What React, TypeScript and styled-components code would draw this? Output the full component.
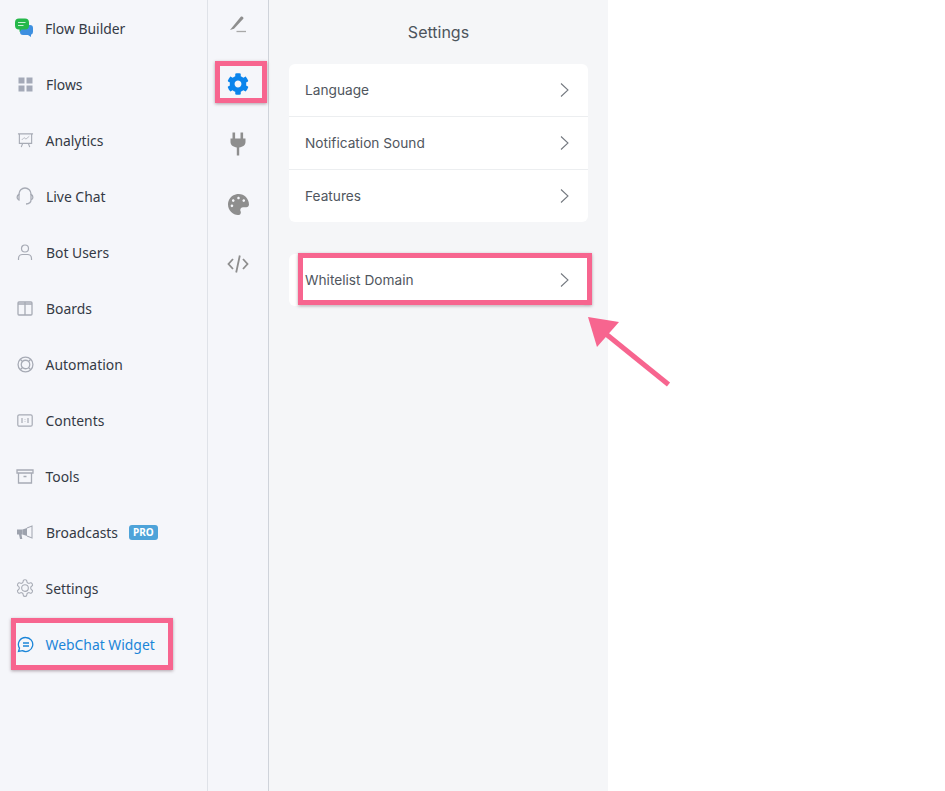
import React from "react";
import styled, { createGlobalStyle } from "styled-components";
import { FaCog, FaPalette } from "react-icons/fa";

const Global = createGlobalStyle`
  html, body { margin: 0; padding: 0; background: #fff; }
  * { box-sizing: border-box; }
`;

const Page = styled.div`
  position: relative;
  display: flex;
  width: 945px;
  height: 791px;
  overflow: hidden;
  background: #fff;
`;

const Sidebar = styled.nav`
  width: 208px;
  height: 100%;
  background: #f5f6fa;
  border-right: 1px solid #dfe2e8;
`;

const NavRow = styled.div`
  position: relative;
  display: flex;
  align-items: center;
  height: 56px;
  padding-left: 14px;
`;

const NavIcon = styled.span`
  display: flex;
  align-items: center;
  justify-content: center;
  width: 22px;
  height: 22px;
  flex: none;
`;

const NavLabel = styled.span<{ $active?: boolean; $shift?: number }>`
  margin-left: ${(p) => 9 + (p.$shift ?? 0)}px;
  font-family: "Noto Sans", "Open Sans", sans-serif;
  font-size: 13.9px;
  color: ${(p) => (p.$active ? "#1b85d8" : "#343a45")};
`;

const ProBadge = styled.span`
  margin-left: 11px;
  padding: 0 4px;
  height: 15px;
  line-height: 15px;
  border-radius: 3px;
  background: #4ea3d9;
  color: #fff;
  font-family: "Noto Sans", sans-serif;
  font-size: 10px;
  font-weight: 700;
`;

const Highlight = styled.div<{ $top: number; $left: number; $right: number; $bottom: number }>`
  position: absolute;
  top: ${(p) => p.$top}px;
  left: ${(p) => p.$left}px;
  right: ${(p) => p.$right}px;
  bottom: ${(p) => p.$bottom}px;
  border: 5px solid #f7658f;
  box-shadow: 0 1px 3px rgba(90, 60, 70, 0.45);
  pointer-events: none;
`;

const Rail = styled.div`
  display: flex;
  flex-direction: column;
  align-items: center;
  gap: 36px;
  width: 61px;
  height: 100%;
  padding-top: 12px;
  background: #f5f6fa;
  border-right: 1px solid #cfd3da;
`;

const RailItem = styled.div`
  position: relative;
  display: flex;
  align-items: center;
  justify-content: center;
  width: 24px;
  height: 24px;
`;

const Panel = styled.main`
  width: 339px;
  height: 100%;
  padding: 0 20px;
  background: #f5f6f8;
  font-family: Inter, "Liberation Sans", sans-serif;
`;

const Title = styled.h1`
  margin: 0;
  height: 64px;
  padding-top: 22px;
  line-height: 20px;
  text-align: center;
  font-size: 16px;
  font-weight: 400;
  color: #4d545c;
`;

const Card = styled.section`
  width: 299px;
  margin-bottom: 32px;
  background: #fff;
  border-radius: 6px;
`;

const SettingRow = styled.div<{ $divider?: boolean }>`
  position: relative;
  display: flex;
  align-items: center;
  justify-content: space-between;
  height: ${(p) => (p.$divider ? 53 : 52)}px;
  padding: 0 18px 0 16px;
  border-bottom: ${(p) => (p.$divider ? "1px solid #eceef0" : "none")};
  font-size: 13.7px;
  color: #50565e;
`;

const ArrowOverlay = styled.svg`
  position: absolute;
  left: 580px;
  top: 310px;
  pointer-events: none;
`;

const S = { fill: "none", stroke: "#a7abb5", strokeWidth: 1.2 };

const Chevron = () => (
  <svg width="10" height="16" viewBox="0 0 10 16">
    <path d="M1 1.500 8 8 1 14.500" fill="none" stroke="#73787f" strokeWidth="1.050" />
  </svg>
);

const icons: Record<string, React.ReactNode> = {
  flowBuilder: (
    <svg width="20" height="20" viewBox="0 0 20 20" style={{ marginLeft: -3 }}>
      <path d="M9 7h7a3 3 0 0 1 3 3v4a3 3 0 0 1-2 2.800V19l-3-2h-5a3 3 0 0 1-3-3v-4a3 3 0 0 1 3-3z" fill="#3d8fe0" />
      <path d="M5 .5h6a4 4 0 0 1 4 4v3a4 4 0 0 1-4 4H7.500L5.500 14v-2.500H5a4 4 0 0 1-4-4v-3a4 4 0 0 1 4-4z" fill="#25b84a" />
      <path d="M4 4.500h7.500M4 7.500h5.500" stroke="#c9f0d3" strokeWidth="1.100" />
    </svg>
  ),
  flows: (
    <svg width="15" height="15" viewBox="0 0 15 15" fill="#a4a9b7">
      <rect x="0.500" y="0.500" width="6" height="6" />
      <rect x="8.500" y="0.500" width="6" height="6" />
      <rect x="0.500" y="8.500" width="6" height="6" />
      <rect x="8.500" y="8.500" width="6" height="6" />
    </svg>
  ),
  analytics: (
    <svg width="17" height="17" viewBox="0 0 18 17" {...S}>
      <path d="M1 1.500h16M2.500 1.500v10h13v-10M6 11.500l-1.500 4M12 11.500l1.500 4" />
      <path d="M5 8l2.500-2.500 2 1.500L13 4" strokeWidth="0.800" />
    </svg>
  ),
  liveChat: (
    <svg width="18" height="18" viewBox="0 0 18 18" {...S} strokeWidth="1.300">
      <path d="M3 8V7a6 6 0 0 1 12 0v1" />
      <path d="M3 7.500C.5 8.200.5 12.300 3 13zM15 7.500c2.500.7 2.500 4.800 0 5.500zM15 13c0 2.500-2 3.800-5 4" />
    </svg>
  ),
  users: (
    <svg width="16" height="17" viewBox="0 0 16 17" {...S}>
      <circle cx="8" cy="4.500" r="3.500" />
      <path d="M1.500 16v-1.500c0-2.500 2-4 4-4h5c2 0 4 1.500 4 4V16" />
    </svg>
  ),
  boards: (
    <svg width="16" height="15" viewBox="0 0 16 15" {...S} strokeWidth="1.300">
      <rect x="1" y="1" width="14" height="13" rx="1" />
      <path d="M8 1v13M1 3h14" />
    </svg>
  ),
  automation: (
    <svg width="17" height="17" viewBox="0 0 16 16" {...S}>
      <circle cx="8" cy="8" r="7" />
      <circle cx="8" cy="8" r="4" />
      <path d="M3 3l2.200 2.200M13 3l-2.200 2.200M3 13l2.200-2.200M13 13l-2.200-2.200" />
    </svg>
  ),
  contents: (
    <svg width="16" height="13" viewBox="0 0 16 13" {...S}>
      <rect x="0.800" y="0.800" width="14.400" height="11.400" rx="1.500" />
      <path d="M5 4v5M8 5v.5M8 7.500V8M11 4v5" />
    </svg>
  ),
  tools: (
    <svg width="18" height="15" viewBox="0 0 18 15" {...S} strokeWidth="1.300">
      <path d="M1 1h16v3H1zM2.500 4v10h13V4M7.500 7.500h3" />
    </svg>
  ),
  broadcasts: (
    <svg width="18" height="15" viewBox="0 0 18 15">
      <path d="M1 4.500h5.500v5H1zM3 9.500h2.500l.8 4.500H4z" fill="#9da2ad" />
      <path d="M6.500 4.500 11 3v8L6.500 9.500z" fill="#9da2ad" />
      <path d="M11 3l5-2v12l-5-2" fill="none" stroke="#a7abb5" strokeWidth="1.100" />
    </svg>
  ),
  settings: (
    <svg width="20" height="20" viewBox="0 0 24 24" {...S} strokeWidth="1.300">
      <path d="M12.220 2h-.44a2 2 0 0 0-2 2v.18a2 2 0 0 1-1 1.730l-.43.250a2 2 0 0 1-2 0l-.15-.08a2 2 0 0 0-2.730.730l-.22.380a2 2 0 0 0 .73 2.730l.15.100a2 2 0 0 1 1 1.720v.510a2 2 0 0 1-1 1.740l-.15.090a2 2 0 0 0-.73 2.730l.22.380a2 2 0 0 0 2.730.730l.15-.08a2 2 0 0 1 2 0l.43.250a2 2 0 0 1 1 1.730V20a2 2 0 0 0 2 2h.44a2 2 0 0 0 2-2v-.18a2 2 0 0 1 1-1.730l.43-.25a2 2 0 0 1 2 0l.15.080a2 2 0 0 0 2.730-.730l.22-.390a2 2 0 0 0-.73-2.730l-.15-.080a2 2 0 0 1-1-1.740v-.500a2 2 0 0 1 1-1.740l.15-.090a2 2 0 0 0 .73-2.730l-.22-.380a2 2 0 0 0-2.730-.730l-.15.080a2 2 0 0 1-2 0l-.43-.250a2 2 0 0 1-1-1.730V4a2 2 0 0 0-2-2z" />
      <circle cx="12" cy="12" r="4" />
    </svg>
  ),
  webchat: (
    <svg width="17" height="17" viewBox="0 0 17 17" fill="none" stroke="#1b85d8" strokeWidth="1.300">
      <path d="M8.800 1.500a7 7 0 1 1-3.300 13.200L1.500 15.500l1-3.300A7 7 0 0 1 8.800 1.500z" />
      <path d="M6 7h6M6 10h6" />
    </svg>
  ),
};

const navItems: { key: string; label: string; shift?: number; pro?: boolean }[] = [
  { key: "flowBuilder", label: "Flow Builder" },
  { key: "flows", label: "Flows", shift: 1 },
  { key: "analytics", label: "Analytics", shift: 0.5 },
  { key: "liveChat", label: "Live Chat", shift: 1 },
  { key: "users", label: "Bot Users", shift: 1 },
  { key: "boards", label: "Boards", shift: 1 },
  { key: "automation", label: "Automation", shift: 0.5 },
  { key: "contents", label: "Contents", shift: 0.5 },
  { key: "tools", label: "Tools", shift: 0.5 },
  { key: "broadcasts", label: "Broadcasts", shift: 1, pro: true },
  { key: "settings", label: "Settings", shift: 0.5 },
];

const PenIcon = () => (
  <svg width="18" height="18" viewBox="0 0 18 18">
    <path d="M1 15 11.800 1.800c1.200-1 3.300.6 2.500 2L5 13.800 1 15z" fill="#8e8e8e" />
    <path d="M7.500 16.500h9.500" stroke="#a8a8a8" strokeWidth="1.300" />
  </svg>
);

const PlugIcon = () => (
  <svg width="16" height="24" viewBox="0 0 16 24" fill="#8e8e8e">
    <rect x="2.500" y="0.500" width="2.600" height="6.500" />
    <rect x="10.500" y="0.500" width="2.600" height="6.500" />
    <path d="M0.500 6.500h15v3.500c0 3-2.500 5-6.500 5.500H7C3 15 .5 13 .5 10z" />
    <rect x="6.800" y="15" width="2.400" height="8.500" />
  </svg>
);

const CodeIcon = () => (
  <svg width="22" height="20" viewBox="0 0 22 20" fill="none" stroke="#8e8e8e" strokeWidth="1.800">
    <path d="M6 5 1.500 10 6 15M16 5l4.500 5L16 15M12.800 1.500 9.200 18.500" />
  </svg>
);

export default function App() {
  return (
    <Page>
      <Global />
      <Sidebar>
        {navItems.map((item) => (
          <NavRow key={item.key}>
            <NavIcon>{icons[item.key]}</NavIcon>
            <NavLabel $shift={item.shift}>{item.label}</NavLabel>
            {item.pro && <ProBadge>PRO</ProBadge>}
          </NavRow>
        ))}
        <NavRow>
          <NavIcon>{icons.webchat}</NavIcon>
          <NavLabel $active $shift={0.5}>WebChat Widget</NavLabel>
          <Highlight $top={2} $left={11} $right={34} $bottom={2} />
        </NavRow>
      </Sidebar>
      <Rail>
        <RailItem><PenIcon /></RailItem>
        <RailItem>
          <FaCog size={22} color="#0a84ec" />
          <Highlight $top={-11} $left={-11} $right={-17} $bottom={-7} />
        </RailItem>
        <RailItem><PlugIcon /></RailItem>
        <RailItem><FaPalette size={21} color="#8e8e8e" /></RailItem>
        <RailItem><CodeIcon /></RailItem>
      </Rail>
      <Panel>
        <Title>Settings</Title>
        <Card>
          <SettingRow $divider>Language<Chevron /></SettingRow>
          <SettingRow $divider>Notification Sound<Chevron /></SettingRow>
          <SettingRow>Features<Chevron /></SettingRow>
        </Card>
        <Card>
          <SettingRow>
            Whitelist Domain
            <Chevron />
            <Highlight $top={-1} $left={9} $right={-4} $bottom={1} />
          </SettingRow>
        </Card>
      </Panel>
      <ArrowOverlay width="100" height="85" viewBox="0 0 100 85">
        <path d="M8 7 39 12 17 37z" fill="#f7658f" />
        <path d="M26 24 88.500 74.500" stroke="#f7658f" strokeWidth="5" fill="none" />
      </ArrowOverlay>
    </Page>
  );
}
